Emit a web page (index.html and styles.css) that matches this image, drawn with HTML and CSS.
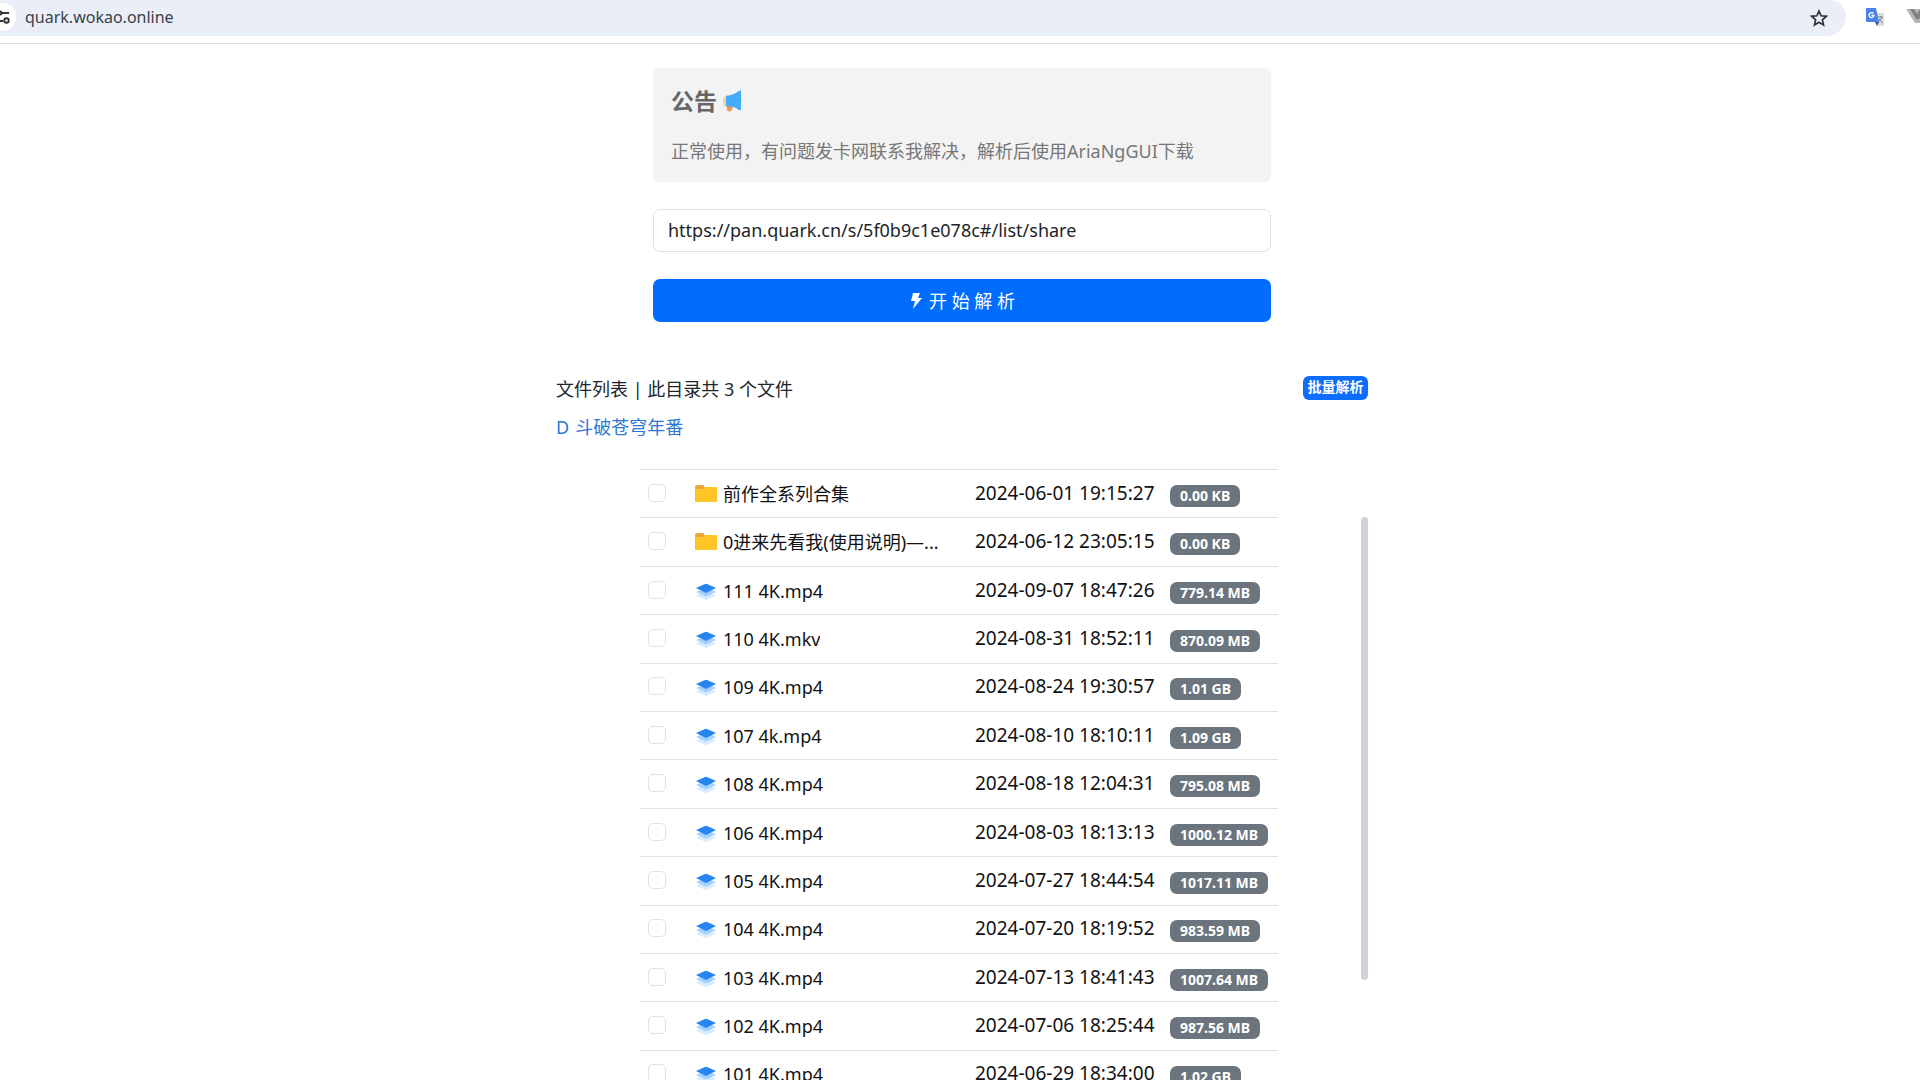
FILE: index.html
```
<!DOCTYPE html>
<html lang="zh-CN">
<head>
<meta charset="utf-8">
<title>quark.wokao.online</title>
<link rel="stylesheet" href="styles.css">
</head>
<body>
<svg width="0" height="0" class="sprite" aria-hidden="true">
  <symbol id="folder" viewBox="0 0 24 20"><path fill="#e9a83c" d="M1 3a2 2 0 0 1 2-2h5a2 2 0 0 1 2 1l1 2v4H1z"/><path fill="#ffc425" d="M1 5h8l2-2h11a1 1 0 0 1 1 1v13a1 1 0 0 1-1 1H2a1 1 0 0 1-1-1z"/></symbol>
  <symbol id="layers" viewBox="0 0 24 20"><path fill="#d8ebff" d="M2 14.500 12 10l10 4.500-9 4.300q-1 .5-2 0z"/><path fill="#a5d1ff" d="M2 11 12 6.500 22 11l-9 4.300q-1 .5-2 0z"/><path fill="#2486ee" d="M2 7 11 3q1-.5 2 0l9 4-9 4.500q-1 .5-2 0z"/></symbol>
</svg>
<header class="toolbar">
  <div class="address">
    <svg class="site-info" width="16" height="36" viewBox="0 0 16 36"><circle cx="2" cy="17" r="14" fill="#fff"/><g fill="none" stroke="#333" stroke-width="2"><path d="M2 13h7M0 21h3"/><circle cx="0" cy="13" r="1.500"/><circle cx="6.500" cy="20.500" r="2.200"/></g></svg>
    <span class="host">quark.wokao.online</span>
    <button class="star" aria-label="收藏"><svg width="18" height="18" viewBox="0 0 18 18"><path d="M9 2l2.100 4.800 5.200.5-3.900 3.500 1.100 5.100L9 13.200l-4.500 2.700 1.100-5.100-3.900-3.500 5.200-.5z" fill="none" stroke="#333" stroke-width="1.700"/></svg></button>
  </div>
  <div class="extensions">
    <svg width="20" height="20" viewBox="0 0 20 20"><path fill="#dcdcdc" d="M8 5h9a1 1 0 0 1 1 1v12h-7z"/><path d="M12 9h5M14.500 8v1M16 9q-1 4-4 5M13 11q1 2 4 4" stroke="#6d8b93" fill="none"/><path fill="#4a83e8" d="M1 0h9l3 14H1a1 1 0 0 1-1-1V1a1 1 0 0 1 1-1z"/><path fill="#3158b5" d="M9 14h4l-2 4z"/><path d="M7.500 5.500A2.500 2.500 0 1 0 8 7.500H5.500" fill="none" stroke="#fff" stroke-width="1.300"/></svg>
    <svg width="14" height="20" viewBox="0 0 14 20"><path fill="#b5b5b5" d="M0 1h14v14h-5z"/><path fill="#808080" d="M4 1h4l3 5 3-5v9l-3 2z"/></svg>
  </div>
</header>
<main class="page">
  <section class="notice">
    <h1 class="notice-title">公告 <svg width="20" height="22" viewBox="0 0 20 22"><path fill="#e8d5a6" d="M1 7l4-2v13l-4-2q-2-4 0-9zM17 8q4 2 0 6z"/><path fill="#f0935a" d="M4 16h6l-1 4q-3 3-5 0z"/><path fill="#45adf7" d="M3 6q8-1 13-5l2-1v20l-2 0q-5-4-13-4z"/></svg></h1>
    <p class="notice-text">正常使用，有问题发卡网联系我解决，解析后使用AriaNgGUI下载</p>
  </section>
  <form class="parse-form">
    <input class="url" type="text" aria-label="分享链接" value="https://pan.quark.cn/s/5f0b9c1e078c#/list/share">
    <button class="submit" type="button"><svg width="14" height="18" viewBox="0 0 14 18"><path fill="#fff" d="M4 1h7L9 6h4L4 17l2-8H2z"/></svg><span>开 始 解 析</span></button>
  </form>
  <section class="files">
    <div class="files-head"><span>文件列表 | 此目录共 3 个文件</span><button class="batch">批量解析</button></div>
    <nav class="crumbs"><a href="#">D</a><a href="#">斗破苍穹年番</a></nav>
    <div class="scroll">
      <table class="list"><tbody id="rows"></tbody></table>
      <div class="thumb"></div>
    </div>
  </section>
</main>
<script src="main.js"></script>
</body>
</html>
```
FILE: styles.css
```
* { box-sizing: border-box; }
body { margin: 0; height: 100vh; overflow: hidden; background: #fff; color: #212529; font: 18px/26px "Noto Sans", "Noto Sans CJK SC", sans-serif; }
button, input { font: inherit; margin: 0; }
a { color: #2b78d6; text-decoration: none; }
.sprite { position: absolute; }
.toolbar { display: flex; height: 44px; border-bottom: 1px solid #d9dde6; }
.address { flex: 1; height: 36px; display: flex; align-items: center; background: #e9eef8; border-radius: 0 16px 20px 0; color: #3a3f47; font-size: 16px; }
.host { flex: 1; padding: 0 0 3px 9px; }
.star { border: 0; background: none; padding: 0; margin-right: 18px; height: 20px; }
.star svg { display: block; }
.extensions { display: flex; gap: 20px; padding: 8px 0 0 20px; }
.page { padding: 24px 0 0 4px; }
.notice, .parse-form { width: 618px; margin: 0 auto; }
.notice { background: #f3f3f3; border-radius: 6px; padding: 16px 18px; height: 114px; color: #666; }
.notice-title { display: flex; align-items: center; gap: 6px; margin: 0 0 20px; font-size: 23px; line-height: 34px; }
.notice-text { margin: 0; color: #777; white-space: nowrap; }
.parse-form { display: grid; gap: 27px; margin-top: 27px; }
.url, .submit { width: 100%; height: 43px; border-radius: 7px; }
.url { border: 1px solid #dee2e6; padding: 0 14px 2px; color: #212529; }
.submit { display: flex; align-items: center; justify-content: center; gap: 6px; border: 0; background: #006dff; color: #fff; }
.files { width: 812px; margin: 54px auto 0; }
.files-head { display: flex; align-items: center; justify-content: space-between; }
.batch { border: 0; border-radius: 6px; width: 65px; height: 24px; padding: 0 0 2px; margin-bottom: 2px; background: #0d6efd; color: #fff; font-size: 14px; line-height: 20px; font-weight: 700; }
.crumbs { display: flex; gap: 6px; margin-top: 12px; }
.scroll { position: relative; margin-top: 29px; padding-right: 6px; }
.list { width: 638px; height: 629px; margin: 0 auto; border-collapse: collapse; table-layout: fixed; color: #111; }
.list td { padding: 0; border-top: 1px solid #dee2e6; white-space: nowrap; }
.list .pick { width: 54px; padding-left: 8px; }
.list .name { width: 281px; }
.list .date { width: 195px; font-size: 19px; padding-bottom: 2px; }
.check { display: block; appearance: none; width: 18px; height: 18px; border: 1px solid #dee2e6; border-radius: 5px; background: #fff; margin-bottom: 2px; }
.file { display: flex; align-items: center; gap: 5px; width: 252px; }
.file svg { flex: none; }
.file span { overflow: hidden; text-overflow: ellipsis; }
.size { display: inline-block; background: #6c757d; color: #fff; border-radius: 7px; padding: 0 10px; font-size: 14px; line-height: 22px; font-weight: 700; vertical-align: middle; }
.thumb { position: absolute; right: 0; top: 48px; width: 7px; height: 463px; border-radius: 4px; background: #d0d2da; }
```
FILE: main.js
```
const files = [
  ["前作全系列合集", "2024-06-01 19:15:27", "0.00 KB", "folder"],
  ["0进来先看我(使用说明)—...", "2024-06-12 23:05:15", "0.00 KB", "folder"],
  ["111 4K.mp4", "2024-09-07 18:47:26", "779.14 MB"],
  ["110 4K.mkv", "2024-08-31 18:52:11", "870.09 MB"],
  ["109 4K.mp4", "2024-08-24 19:30:57", "1.01 GB"],
  ["107 4k.mp4", "2024-08-10 18:10:11", "1.09 GB"],
  ["108 4K.mp4", "2024-08-18 12:04:31", "795.08 MB"],
  ["106 4K.mp4", "2024-08-03 18:13:13", "1000.12 MB"],
  ["105 4K.mp4", "2024-07-27 18:44:54", "1017.11 MB"],
  ["104 4K.mp4", "2024-07-20 18:19:52", "983.59 MB"],
  ["103 4K.mp4", "2024-07-13 18:41:43", "1007.64 MB"],
  ["102 4K.mp4", "2024-07-06 18:25:44", "987.56 MB"],
  ["101 4K.mp4", "2024-06-29 18:34:00", "1.02 GB"]
];
document.getElementById("rows").innerHTML = files.map(([name, date, size, icon = "layers"]) => `
  <tr>
    <td class="pick"><input class="check" type="checkbox" aria-label="${name}"></td>
    <td class="name"><div class="file"><svg width="24" height="20"><use href="#${icon}"/></svg><span>${name}</span></div></td>
    <td class="date">${date}</td>
    <td><span class="size">${size}</span></td>
  </tr>`).join("");
```
